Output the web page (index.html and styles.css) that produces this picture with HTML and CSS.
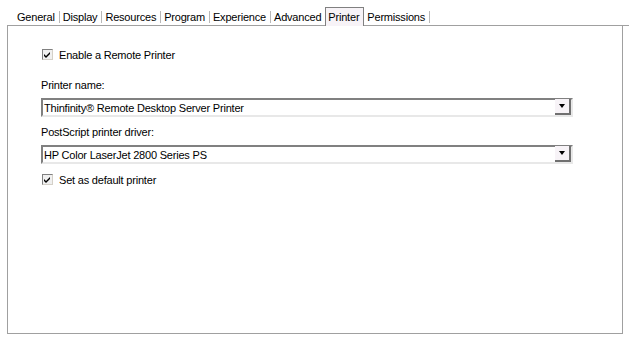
FILE: index.html
```html
<!DOCTYPE html>
<html>

<head>
  <link rel="stylesheet" href="styles.css">
</head>

<body>
  <div class="tabs">
    <span class="tab">General</span>
    <span class="tab">Display</span>
    <span class="tab">Resources</span>
    <span class="tab">Program</span>
    <span class="tab">Experience</span>
    <span class="tab">Advanced</span>
    <span class="tab active">Printer</span>
    <span class="tab">Permissions</span>
  </div>

  <div class="panel">
    <label class="check first">
      <span class="box"><svg width="9" height="9" viewBox="0 0 9 9"><path d="M1 4 L3 6 L7 2 L7 4 L3 8 L1 6 Z" fill="#000"/></svg></span>
      Enable a Remote Printer
    </label>

    <div class="field-label">Printer name:</div>
    <div class="combo">
      <span class="combo-text">Thinfinity® Remote Desktop Server Printer</span>
      <span class="combo-btn"><span class="arrow"></span></span>
    </div>

    <div class="field-label">PostScript printer driver:</div>
    <div class="combo">
      <span class="combo-text">HP Color LaserJet 2800 Series PS</span>
      <span class="combo-btn"><span class="arrow"></span></span>
    </div>

    <label class="check">
      <span class="box"><svg width="9" height="9" viewBox="0 0 9 9"><path d="M1 4 L3 6 L7 2 L7 4 L3 8 L1 6 Z" fill="#000"/></svg></span>
      Set as default printer
    </label>
  </div>
</body>

</html>
```

FILE: styles.css
```css
body {
  margin: 0;
  background-color: white;
  font-family: "Liberation Sans", Arial, sans-serif;
  font-size: 11px;
  letter-spacing: -0.2px;
  color: black;
}

/* tab strip */
.tabs {
  display: flex;
  align-items: flex-end;
  margin: 6px 6px 0 7px;
  padding-left: 7px;
  height: 19px;
  border-bottom: 1px solid #a0a0a0;
}

.tab {
  padding: 0 4px 0 3px;
  margin-bottom: 2px;
  border-right: 1px solid #b8b8b8;
  line-height: 12px;
}

.tab.active {
  border: 1px solid #808080;
  border-bottom: none;
  background-color: #f7f3f7;
  padding: 3px 4px 3px 2px;
  margin-left: -1px;
  margin-bottom: -1px;
}

/* panel */
.panel {
  box-sizing: border-box;
  margin: 0 12px 0 7px;
  height: 308px;
  border: 1px solid #a0a0a0;
  border-top: none;
  padding: 22px 49px 0 33px;
}

.check {
  display: flex;
  align-items: center;
  gap: 6px;
  margin-left: 1px;
  height: 13px;
}

.check.first {
  margin-bottom: 18px;
}

.box {
  display: inline-flex;
  align-items: center;
  justify-content: center;
  width: 9px;
  height: 9px;
  border: 1px solid #808080;
  border-right-color: #d4d0c8;
  border-bottom-color: #d4d0c8;
  background-color: #f0f0f0;
}

.field-label {
  height: 13px;
  margin-bottom: 6px;
}

.combo {
  display: flex;
  align-items: center;
  height: 15px;
  border: 2px solid #808080;
  border-right-color: #e8e8e8;
  border-bottom-color: #e8e8e8;
  margin-bottom: 9px;
}

.combo-text {
  flex: 1;
  padding-left: 1px;
}

.combo-btn {
  display: flex;
  align-items: center;
  justify-content: center;
  width: 14px;
  height: 14px;
  background-color: #f7f3f7;
  border-right: 2px solid #707070;
  border-bottom: 2px solid #707070;
  margin-top: -1px;
}

.arrow {
  width: 0;
  height: 0;
  border-left: 3px solid transparent;
  border-right: 3px solid transparent;
  border-top: 4px solid black;
}
```
